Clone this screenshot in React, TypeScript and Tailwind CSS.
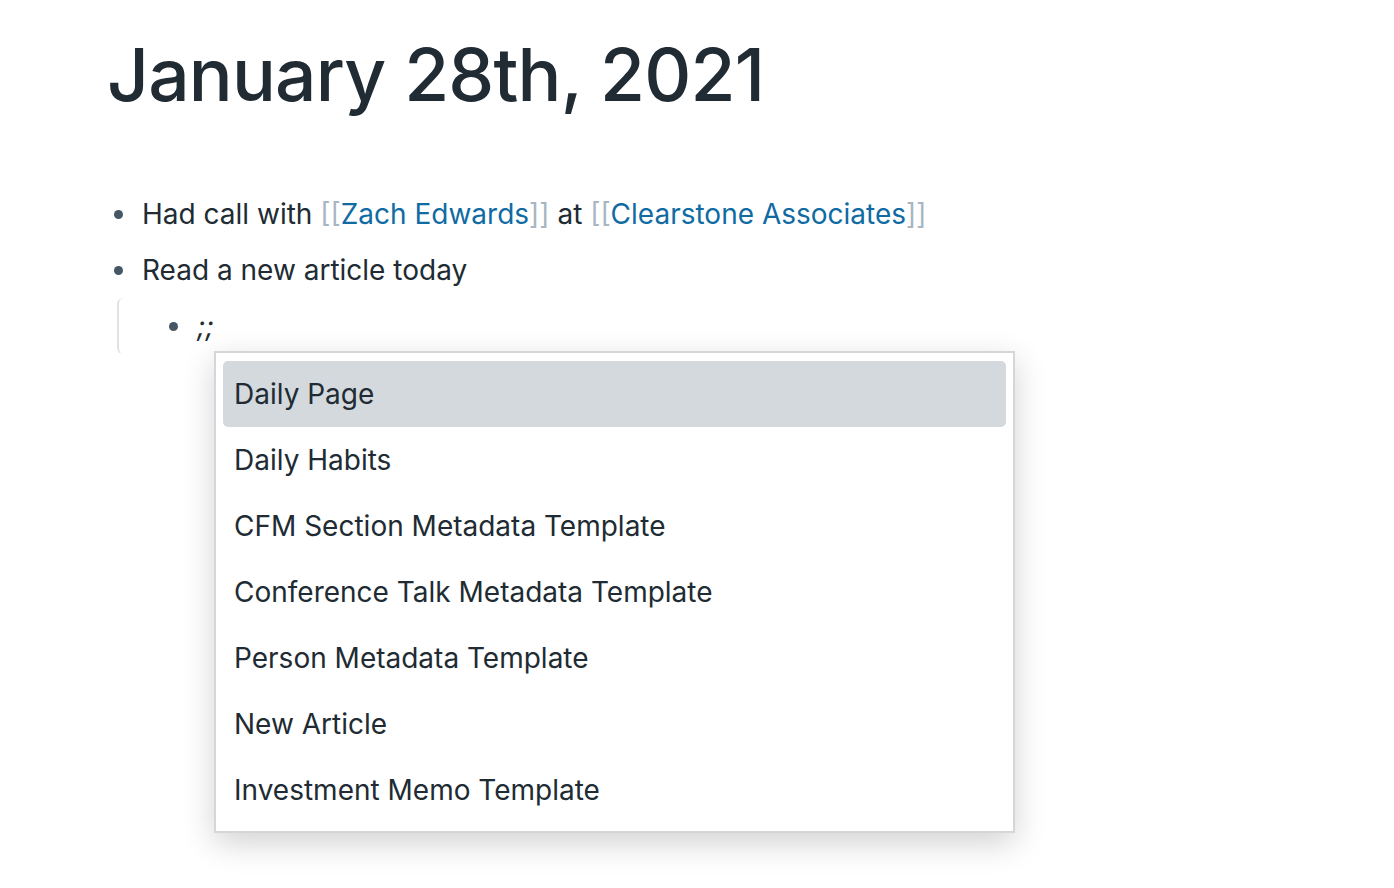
const items = [
  "Daily Page",
  "Daily Habits",
  "CFM Section Metadata Template",
  "Conference Talk Metadata Template",
  "Person Metadata Template",
  "New Article",
  "Investment Memo Template",
];

const Bullet = () => (
  <span className="flex w-[22px] shrink-0 items-center justify-center">
    <span className="h-[9px] w-[9px] rounded-full bg-[#465664]" />
  </span>
);

const Ref = ({ name }: { name: string }) => (
  <span>
    <span className="text-[#a7b6c2]">[[</span>
    <span className="text-[#106ba3]">{name}</span>
    <span className="text-[#a7b6c2]">]]</span>
  </span>
);

export default function App() {
  return (
    <div
      className="relative min-h-[888px] bg-white text-[#202b33]"
      style={{ fontFamily: "Inter, 'Noto Sans', sans-serif" }}
    >
      <div className="pl-[107px] pt-[30px]">
        <h1 className="text-[73px] font-medium leading-[90px] tracking-[-0.8px]">
          January 28th, 2021
        </h1>

        <div className="mt-[66px] text-[28px]">
          <div className="flex h-[56px] items-center gap-[13px]">
            <Bullet />
            <span>
              Had call with <Ref name="Zach Edwards" /> at{" "}
              <Ref name="Clearstone Associates" />
            </span>
          </div>
          <div className="flex h-[56px] items-center gap-[13px]">
            <Bullet />
            <span>Read a new article today</span>
          </div>
          <div className="ml-[10px] flex h-[56px] items-center rounded-l-[6px] border-l-2 border-[#dfe3e8] pl-[43px]">
            <div className="flex items-center gap-[13px]">
              <Bullet />
              <span className="italic">;;</span>
            </div>
          </div>
        </div>
      </div>

      <div className="absolute left-[214px] top-[351px] w-[801px] border-2 border-[#d4d7da] bg-white px-[7px] py-[8px] shadow-[0_10px_30px_rgba(0,0,0,0.18)]">
        {items.map((item, i) => (
          <div
            key={item}
            className={
              "flex h-[66px] items-center rounded-[5px] px-[11px] text-[28px] " +
              (i === 0 ? "bg-[#d4d9de]" : "")
            }
          >
            {item}
          </div>
        ))}
      </div>
    </div>
  );
}
